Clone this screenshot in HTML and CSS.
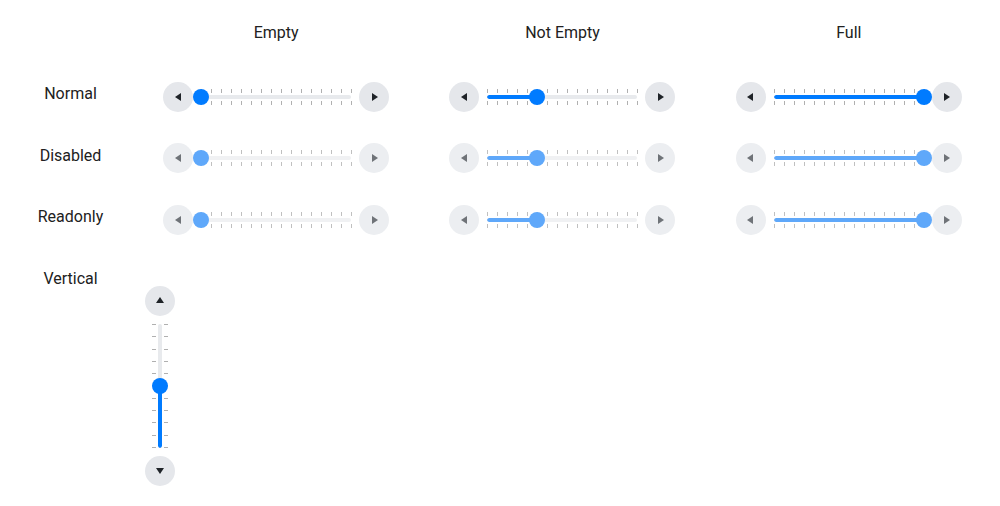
FILE: index.html
```html
<!DOCTYPE html>
<html>
<head>
<meta charset="utf-8">
<link rel="stylesheet" href="styles.css">
</head>
<body>
<div class="grid">
  <div></div>
  <div class="head">Empty</div>
  <div class="head">Not Empty</div>
  <div class="head">Full</div>

  <div class="label">Normal</div>
  <div class="cell">
    <div class="slider">
      <button class="btn"><span class="tri left"></span></button>
      <div class="rail"><div class="ticks top"></div><div class="track"><div class="fill" style="width:0%"></div></div><div class="ticks bottom"></div><div class="thumb" style="left:0%"></div></div>
      <button class="btn"><span class="tri right"></span></button>
    </div>
  </div>
  <div class="cell">
    <div class="slider">
      <button class="btn"><span class="tri left"></span></button>
      <div class="rail"><div class="ticks top"></div><div class="track"><div class="fill" style="width:33.333%"></div></div><div class="ticks bottom"></div><div class="thumb" style="left:33.333%"></div></div>
      <button class="btn"><span class="tri right"></span></button>
    </div>
  </div>
  <div class="cell">
    <div class="slider">
      <button class="btn"><span class="tri left"></span></button>
      <div class="rail"><div class="ticks top"></div><div class="track"><div class="fill" style="width:100%"></div></div><div class="ticks bottom"></div><div class="thumb" style="left:100%"></div></div>
      <button class="btn"><span class="tri right"></span></button>
    </div>
  </div>

  <div class="label l2">Disabled</div>
  <div class="cell">
    <div class="slider muted">
      <button class="btn"><span class="tri left"></span></button>
      <div class="rail"><div class="ticks top"></div><div class="track"><div class="fill" style="width:0%"></div></div><div class="ticks bottom"></div><div class="thumb" style="left:0%"></div></div>
      <button class="btn"><span class="tri right"></span></button>
    </div>
  </div>
  <div class="cell">
    <div class="slider muted">
      <button class="btn"><span class="tri left"></span></button>
      <div class="rail"><div class="ticks top"></div><div class="track"><div class="fill" style="width:33.333%"></div></div><div class="ticks bottom"></div><div class="thumb" style="left:33.333%"></div></div>
      <button class="btn"><span class="tri right"></span></button>
    </div>
  </div>
  <div class="cell">
    <div class="slider muted">
      <button class="btn"><span class="tri left"></span></button>
      <div class="rail"><div class="ticks top"></div><div class="track"><div class="fill" style="width:100%"></div></div><div class="ticks bottom"></div><div class="thumb" style="left:100%"></div></div>
      <button class="btn"><span class="tri right"></span></button>
    </div>
  </div>

  <div class="label">Readonly</div>
  <div class="cell">
    <div class="slider muted">
      <button class="btn"><span class="tri left"></span></button>
      <div class="rail"><div class="ticks top"></div><div class="track"><div class="fill" style="width:0%"></div></div><div class="ticks bottom"></div><div class="thumb" style="left:0%"></div></div>
      <button class="btn"><span class="tri right"></span></button>
    </div>
  </div>
  <div class="cell">
    <div class="slider muted">
      <button class="btn"><span class="tri left"></span></button>
      <div class="rail"><div class="ticks top"></div><div class="track"><div class="fill" style="width:33.333%"></div></div><div class="ticks bottom"></div><div class="thumb" style="left:33.333%"></div></div>
      <button class="btn"><span class="tri right"></span></button>
    </div>
  </div>
  <div class="cell">
    <div class="slider muted">
      <button class="btn"><span class="tri left"></span></button>
      <div class="rail"><div class="ticks top"></div><div class="track"><div class="fill" style="width:100%"></div></div><div class="ticks bottom"></div><div class="thumb" style="left:100%"></div></div>
      <button class="btn"><span class="tri right"></span></button>
    </div>
  </div>

  <div class="label vlabel">Vertical</div>
  <div class="vcell">
    <div class="vslider">
      <button class="btn"><span class="tri up"></span></button>
      <div class="vrail">
        <div class="vticks vleft"><i></i><i></i><i></i><i></i><i></i><i></i><i></i><i></i><i></i><i></i><i></i></div>
        <div class="vtrack"><div class="vfill" style="height:50%"></div></div>
        <div class="vticks vright"><i></i><i></i><i></i><i></i><i></i><i></i><i></i><i></i><i></i><i></i><i></i></div>
        <div class="vthumb" style="top:50%"></div>
      </div>
      <button class="btn"><span class="tri down"></span></button>
    </div>
  </div>
</div>
</body>
</html>
```
FILE: styles.css
```css
* { box-sizing: border-box; }
body {
  margin: 8px;
  background: #ffffff;
  font-family: Roboto, "Liberation Sans", sans-serif;
  font-size: 16px;
  color: #212121;
}
.grid {
  display: grid;
  grid-template-columns: 125px repeat(3, 1fr);
  grid-template-rows: 74px 61.33px 61.33px 61.33px auto;
  align-items: start;
}
.head {
  text-align: center;
  padding-top: 15px;
}
.label {
  text-align: center;
  padding-top: 2px;
}
.l2 { padding-top: 3px; }
.vlabel { padding-top: 3px; }
.cell {
  display: flex;
  justify-content: center;
}
.slider {
  display: flex;
  align-items: center;
  gap: 8px;
}
.btn {
  width: 30px;
  height: 30px;
  border: none;
  padding: 0;
  border-radius: 50%;
  background: #e5e7eb;
  display: flex;
  align-items: center;
  justify-content: center;
}
.tri { width: 0; height: 0; display: block; }
.tri.left { border-top: 4px solid transparent; border-bottom: 4px solid transparent; border-right: 6px solid #1f2328; margin-left: -1px; }
.tri.right { border-top: 4px solid transparent; border-bottom: 4px solid transparent; border-left: 6px solid #1f2328; margin-left: 1px; }
.tri.up { border-left: 4px solid transparent; border-right: 4px solid transparent; border-bottom: 6px solid #1f2328; margin-top: -1px; }
.tri.down { border-left: 4px solid transparent; border-right: 4px solid transparent; border-top: 6px solid #1f2328; margin-top: 1px; }

.rail {
  position: relative;
  width: 150px;
  height: 30px;
}
.ticks {
  position: absolute;
  left: 0;
  width: 151px;
  height: 4px;
  background: repeating-linear-gradient(to right, #b0b0b0 0 1px, transparent 1px 10px);
}
.ticks.top { top: 7px; }
.ticks.bottom { top: 19px; }
.track {
  position: absolute;
  left: 0;
  top: 13px;
  width: 150px;
  height: 4px;
  border-radius: 2px;
  background: #e8eaed;
  overflow: hidden;
}
.fill {
  height: 100%;
  background: #007bff;
  border-radius: 2px;
}
.thumb {
  position: absolute;
  top: 7px;
  width: 16px;
  height: 16px;
  margin-left: -8px;
  border-radius: 50%;
  background: #007bff;
}
.muted .btn { background: #eceef1; }
.muted .tri.left { border-right-color: #6f7378; }
.muted .tri.right { border-left-color: #6f7378; }
.muted .track { background: #f0f1f3; }
.muted .fill, .muted .thumb { background: #5fa8fa; }
.muted .ticks { background: repeating-linear-gradient(to right, #c0c0c0 0 1px, transparent 1px 10px); }

.vcell {
  padding-top: 20px;
  padding-left: 12px;
}
.vslider {
  display: flex;
  flex-direction: column;
  align-items: center;
  gap: 8px;
  width: 30px;
}
.vrail {
  position: relative;
  width: 30px;
  height: 124px;
}
.vticks {
  position: absolute;
  top: 0;
  bottom: 0;
  width: 4px;
  display: flex;
  flex-direction: column;
  justify-content: space-between;
}
.vticks i { display: block; height: 1px; background: #b0b0b0; }
.vleft { left: 7px; }
.vright { left: 19px; }
.vtrack {
  position: absolute;
  left: 13px;
  top: 0;
  width: 4px;
  height: 124px;
  border-radius: 2px;
  background: #e8eaed;
  display: flex;
  flex-direction: column;
  justify-content: flex-end;
  overflow: hidden;
}
.vfill { width: 100%; background: #007bff; border-radius: 2px; }
.vthumb {
  position: absolute;
  left: 7px;
  width: 16px;
  height: 16px;
  margin-top: -8px;
  border-radius: 50%;
  background: #007bff;
}
```
